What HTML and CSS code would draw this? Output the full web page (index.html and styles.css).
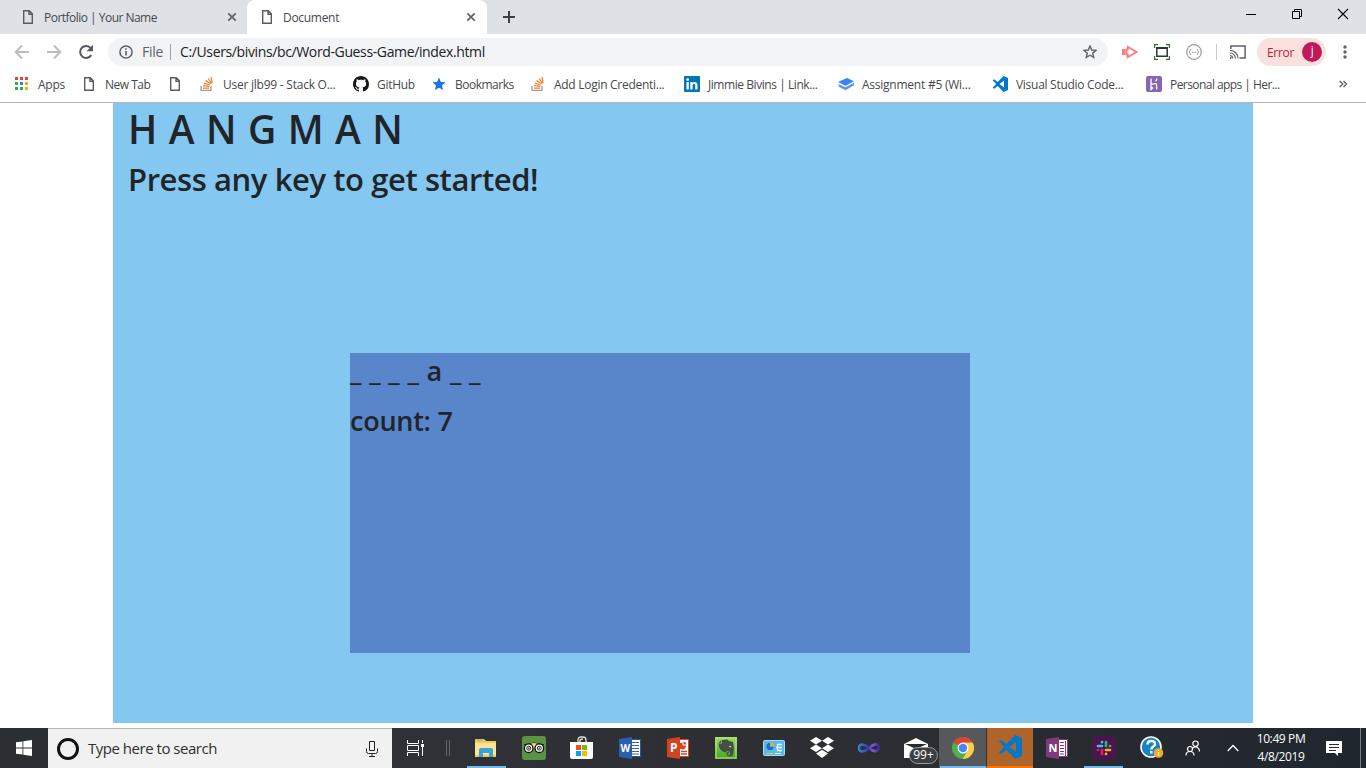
FILE: index.html
```html
<!DOCTYPE html>
<html lang="en">
<head>
<meta charset="utf-8">
<title>Document</title>
<link rel="stylesheet" href="styles.css">
</head>
<body>
<svg class="defs" width="0" height="0">
  <symbol id="page" viewBox="0 0 16 16"><path d="M3.700 1.700h5.600l3 3v9.600H3.700z M9 2v3.200h3.300" fill="none" stroke="#5a5d61" stroke-width="1.400"/></symbol>
  <symbol id="close" viewBox="0 0 10 10"><path d="M1.300 1.300l7.400 7.400M8.700 1.300L1.300 8.700" stroke="#5f6368" stroke-width="1.700"/></symbol>
  <symbol id="stack" viewBox="0 0 16 16"><path d="M2 10v4.300h10V10" fill="none" stroke="#9a9c9f" stroke-width="1.300"/><path d="M4 12.100h6.200M4.100 9.700l6.200.7M4.800 7.200l5.900 1.800M6.500 4.500l5.100 3.300M9.200 2.500l3.500 4.800M12 1.200l1.200 5.500" stroke="#f48024" stroke-width="1.250"/></symbol>
  <symbol id="vscode" viewBox="0 0 16 16"><path d="M11.500 0L5.700 6 2.200 3.300.6 4.200 4.200 8 .6 11.800l1.600.9 3.500-2.700 5.800 6 4.500-2V2zM12 4.600v6.800L7.600 8z" fill="#0078cc" fill-rule="evenodd"/></symbol>
</svg>

<header class="browser">
  <div class="tabstrip">
    <div class="tab">
      <svg class="ico16"><use href="#page"/></svg><span class="tab-title t-portfolio">Portfolio | Your Name</span><svg class="ico10"><use href="#close"/></svg>
    </div>
    <div class="tab tab-active">
      <svg class="ico16"><use href="#page"/></svg><span class="tab-title t-document">Document</span><svg class="ico10"><use href="#close"/></svg>
    </div>
    <svg class="newtab" viewBox="0 0 12 12"><path d="M6 0v12M0 6h12" stroke="#3c4043" stroke-width="2"/></svg>
    <div class="window-buttons">
      <svg width="12" height="12"><path d="M1 6.500h10" stroke="#000"/></svg>
      <svg width="12" height="12"><path d="M1.500 3.500h7v7h-7zM3.500 3.500v-2h7v7h-2" fill="none" stroke="#000"/></svg>
      <svg width="12" height="12"><path d="M1 1l10 10M11 1L1 11" stroke="#000" stroke-width="1.100"/></svg>
    </div>
  </div>

  <div class="toolbar">
    <svg class="nav" viewBox="0 0 16 16"><path d="M15 8H2M8 1.500L1.700 8 8 14.500" fill="none" stroke="#babcbe" stroke-width="1.900"/></svg>
    <svg class="nav" viewBox="0 0 16 16"><path d="M1 8h13M8 1.500L14.300 8 8 14.500" fill="none" stroke="#babcbe" stroke-width="1.900"/></svg>
    <svg class="nav" viewBox="0 0 16 16"><path d="M13.300 11A6 6 0 1 1 12.800 4.200" fill="none" stroke="#55595e" stroke-width="2"/><path d="M15 .8v6.500H8.500z" fill="#55595e"/></svg>
    <div class="omnibox">
      <svg width="14" height="14"><circle cx="7" cy="7" r="6.100" fill="none" stroke="#5f6368" stroke-width="1.500"/><path d="M7 6v4.600M7 3.200v1.600" stroke="#5f6368" stroke-width="1.600"/></svg>
      <span class="scheme">File</span>
      <span class="divider"></span>
      <span class="url">C:/Users/bivins/bc/Word-Guess-Game/index.html</span>
      <svg class="star" width="14" height="14" viewBox="0 0 14 14"><path d="M7 1l1.700 4 4.300.400-3.300 2.800 1 4.200L7 10.200l-3.700 2.200 1-4.200L1 5.400 5.300 5z" fill="none" stroke="#5f6368" stroke-width="1.400"/></svg>
    </div>
    <div class="extensions">
      <svg width="16" height="16"><path d="M0 5h3.500v6H0z" fill="#ff7b7b"/><path d="M5.800 2.800v2.700H4.500v5h1.300v2.700L14.500 8z" fill="none" stroke="#ff7b7b" stroke-width="1.800"/></svg>
      <svg width="16" height="16"><path d="M.6 4V.6H4M12 .6h3.400V4M15.400 12v3.400H12M4 15.400H.6V12" fill="none" stroke="#238023" stroke-width="1.300"/><path d="M2.800 3.800h10.400v8.400H2.800z" fill="#fff" stroke="#333" stroke-width="1.500"/><path d="M2 4h12" stroke="#333" stroke-width="2"/></svg>
      <svg width="16" height="16"><circle cx="8" cy="8" r="7.300" fill="none" stroke="#9c9c9c" stroke-width="1.200"/><path d="M5.300 5.300q-1.200 0-1.200 1.300T3 8q1.100 0 1.100 1.400t1.200 1.300M10.700 5.300q1.200 0 1.200 1.300T13 8q-1.100 0-1.100 1.400t-1.200 1.300M6 8.500h1m.6 0h1m.6 0h1" fill="none" stroke="#999"/></svg>
    </div>
    <span class="toolbar-divider"></span>
    <svg class="cast" width="18" height="16" viewBox="0 0 18 16"><path d="M1.900 5V2h14.200v12H10.500" fill="none" stroke="#5f6368" stroke-width="1.500"/><path d="M1 11.600a2.800 2.800 0 0 1 2.800 2.900M1 9a5.400 5.400 0 0 1 5.400 5.500M1 6.400a8 8 0 0 1 8 8.100" fill="none" stroke="#5f6368" stroke-width="1.200"/><circle cx="1.700" cy="14" r="1" fill="#5f6368"/></svg>
    <div class="profile"><span class="error">Error</span><span class="avatar">j</span></div>
    <svg class="more" width="4" height="14"><g fill="#5f6368"><circle cx="2" cy="2" r="1.700"/><circle cx="2" cy="7" r="1.700"/><circle cx="2" cy="12" r="1.700"/></g></svg>
  </div>

  <nav class="bookmarks">
    <a class="bm"><svg class="ico16" viewBox="0 0 16 16"><path d="M1 1h3v3H1zM6 1h3v3H6zM11 1h3v3h-3z" fill="#ea4335"/><path d="M1 6h3v3H1zM1 11h3v3H1zM6 11h3v3H6z" fill="#34a853"/><path d="M6 6h3v3H6z" fill="#1a83f5"/><path d="M11 6h3v3h-3zM11 11h3v3h-3z" fill="#fbac05"/></svg><span class="b-apps">Apps</span></a>
    <a class="bm"><svg class="ico16"><use href="#page"/></svg><span class="b-new">New Tab</span></a>
    <a class="bm"><svg class="ico16"><use href="#page"/></svg></a>
    <a class="bm"><svg class="ico16"><use href="#stack"/></svg><span class="b-user">User jlb99 - Stack O...</span></a>
    <a class="bm"><svg class="ico16" viewBox="0 0 16 16"><path fill="#191717" d="M8 0C3.580 0 0 3.580 0 8c0 3.540 2.290 6.530 5.470 7.590.4.070.55-.17.55-.38 0-.19-.01-.82-.01-1.490-2.010.37-2.530-.49-2.690-.94-.09-.23-.48-.94-.82-1.130-.28-.15-.68-.52-.01-.53.63-.01 1.080.58 1.230.82.720 1.210 1.870.87 2.330.66.070-.52.280-.87.510-1.070-1.780-.2-3.640-.89-3.640-3.950 0-.87.310-1.590.82-2.150-.08-.2-.36-1.020.08-2.120 0 0 .67-.21 2.200.82.640-.18 1.320-.27 2-.27s1.360.09 2 .27c1.530-1.040 2.200-.82 2.200-.82.440 1.100.160 1.920.080 2.120.510.560.820 1.270.820 2.150 0 3.070-1.870 3.750-3.650 3.950.290.250.540.730.540 1.480 0 1.070-.010 1.930-.010 2.200 0 .210.150.460.550.380A8.010 8.010 0 0 0 16 8c0-4.420-3.580-8-8-8z"/></svg><span class="b-git">GitHub</span></a>
    <a class="bm"><svg class="ico16" viewBox="0 0 16 16"><path d="M8 1.500l1.900 4.400 4.700.4-3.600 3.100 1.100 4.700L8 11.700l-4.100 2.400L5 9.400 1.400 6.300l4.700-.4z" fill="#1a73e8"/></svg><span class="b-book">Bookmarks</span></a>
    <a class="bm"><svg class="ico16"><use href="#stack"/></svg><span class="b-add">Add Login Credenti...</span></a>
    <a class="bm"><svg class="ico16" viewBox="0 0 16 16"><rect width="16" height="16" rx="1" fill="#0077b5"/><path d="M2.500 6h2.300v7.500H2.500zM6.300 6h2.200v1c1-1.700 5-1.700 5 2v4.500h-2.300V9.700c0-2.400-2.600-2.200-2.600 0v3.800H6.300z" fill="#fff"/><circle cx="3.650" cy="3.600" r="1.350" fill="#fff"/></svg><span class="b-link">Jimmie Bivins | Link...</span></a>
    <a class="bm"><svg class="ico16" viewBox="0 0 16 16"><path d="M0 6L9 2l7 3.300-8.500 4.500z" fill="#3b82f6"/><path d="M0 7.800l7.500 3.500L16 6.800v2.400l-8.500 5L0 10.300l1.300-.8z" fill="#5a96f8"/></svg><span class="b-assign">Assignment #5 (Wi...</span></a>
    <a class="bm"><svg class="ico16"><use href="#vscode"/></svg><span class="b-vs">Visual Studio Code...</span></a>
    <a class="bm"><svg class="ico16" viewBox="0 0 16 16"><rect width="16" height="16" rx="2" fill="#8566b5"/><path d="M5 2.500v6.300Q10.600 6.500 10.600 9v4.500M5 10.500v3l1.600-1.500zM10.800 2.500q0 1.600-1.200 2.800" fill="none" stroke="#fff" stroke-width="1.300"/></svg><span class="b-her">Personal apps | Her...</span></a>
    <svg class="overflow" width="8" height="8"><path d="M.7 1l3 3-3 3M4.500 1l3 3-3 3" fill="none" stroke="#5f6368" stroke-width="1.500"/></svg>
  </nav>
</header>

<main class="viewport">
  <div class="container">
    <h1>H A N G M A N</h1>
    <h2>Press any key to get started!</h2>
    <section class="game">
      <h3 class="word">_ _ _ _ a _ _</h3>
      <h3 class="count">count: 7</h3>
    </section>
  </div>
</main>

<footer class="taskbar">
  <div class="cell"><svg width="16" height="16"><path d="M0 2.300l6.500-.9v6.200H0zM7.300 1.200L16 0v7.600H7.300zM0 8.400h6.500v6.200L0 13.700zM7.300 8.400H16V16l-8.700-1.200z" fill="#fff"/></svg></div>
  <div class="search">
    <span class="cortana"></span>
    <span class="placeholder">Type here to search</span>
    <svg class="mic" width="12" height="18"><path d="M3.500 1.500h5v9h-5zM.5 8.500v3q0 2 2 2h7q2 0 2-2v-3M6 14v2.500M3 16.500h6" fill="none" stroke="#222"/></svg>
  </div>
  <div class="cell"><svg width="18" height="16"><path d="M.5 0v3.500h11V0M.5 16v-3.500h11V16M.5 5.500h11v5H.5zM15.500 0v3M15.500 7v9" fill="none" stroke="#fff"/><path d="M14 4h3v3h-3z" fill="#fff"/></svg></div>
  <div class="cell grip"><svg width="5" height="16"><path d="M1.500 0v16M4.500 0v16" stroke="#62656a"/></svg></div>
  <div class="cell running"><svg width="22" height="20"><path d="M0 2q0-1 1-1h8l2 2h10v16H0z" fill="#f6c951"/><path d="M0 5h21v12H0z" fill="#ffe394"/><path d="M2 2h6" stroke="#5cb6e5"/><path d="M4 19v-7q0-2 2-2h10q2 0 2 2v7h-4v-4H8v4z" fill="#35a5dc"/></svg></div>
  <div class="cell"><svg width="24" height="24"><rect width="24" height="24" rx="3" fill="#589442"/><path d="M2 8h5q5-3 10 0h5l-2 3H4z" fill="#111"/><path d="M8 8q4-2 8 0l-4 5z" fill="#efd28c"/><g fill="#fff" stroke="#111" stroke-width="1.300"><circle cx="6.700" cy="12.200" r="4.300"/><circle cx="17.300" cy="12.200" r="4.300"/></g><g fill="none" stroke="#222"><circle cx="6.700" cy="12.200" r="2"/><circle cx="17.300" cy="12.200" r="2"/></g><circle cx="6.700" cy="12.200" r="1" fill="#d23"/><circle cx="17.300" cy="12.200" r="1" fill="#284"/></svg></div>
  <div class="cell"><svg width="24" height="24"><path d="M8 7V4q0-3 3-3h2q3 0 3 3v3M10 7V5q0-2 3-2" fill="none" stroke="#ddd" stroke-width="1.300"/><path d="M0 6h23v15q0 2-2 2H2q-2 0-2-2z" fill="#fff"/><path d="M6 9h5v5H6z" fill="#f25022"/><path d="M12 9h5v5h-5z" fill="#7fba00"/><path d="M6 15h5v5H6z" fill="#00a4ef"/><path d="M12 15h5v5h-5z" fill="#ffb900"/></svg></div>
  <div class="cell"><svg width="22" height="22"><path d="M12 2.500h9.500v17H12z" fill="#fff" stroke="#2b579a"/><path d="M13 5.500h7M13 8.500h7M13 11.500h7M13 14.500h7M13 17h7" stroke="#3565ad"/><path d="M0 2l13-2v22L0 20z" fill="#2b5fac"/><text x="1.500" y="15" class="glyph w">W</text></svg></div>
  <div class="cell"><svg width="22" height="22"><path d="M12 2.500h9.500v17H12z" fill="#fff" stroke="#d24726"/><path d="M14 14.500h6M14 17h6" stroke="#d24726" stroke-width="1.400"/><circle cx="15.500" cy="9" r="3.400" fill="#d24726"/><path d="M16 8V4q4 0 4 4z" fill="#d24726" stroke="#fff"/><path d="M0 2l13-2v22L0 20z" fill="#d04423"/><text x="3" y="15" class="glyph">P</text></svg></div>
  <div class="cell"><svg width="22" height="22"><defs><linearGradient id="ever" x2="0" y2="1"><stop stop-color="#9bd96b"/><stop offset="1" stop-color="#4aa020"/></linearGradient></defs><rect width="22" height="22" fill="url(#ever)"/><rect x="1" y="1" width="20" height="20" fill="none" stroke="#b5ec82"/><path d="M3.500 6.500h3.500V3l5-.5 2 1.500 4 1q1.500 5 .5 10.500-.5 4-3.500 4-3.500 0-3.500-3 0-2 2.500-2v1.500q-1.300 0-1.300 1.300 0 1 1.500 1 1.500-1 .5-3.800l-3-.5-1 1.500Q4 14.500 3.500 6.500z" fill="#444e43"/><path d="M3.700 5.700h2.600V3z" fill="#444e43"/><path d="M13.500 9.500q2.500-2 3 1.200z" fill="#b5e592"/></svg></div>
  <div class="cell"><svg width="22" height="16"><rect x=".5" y=".5" width="21" height="15" rx="1" fill="#57b8ec" stroke="#a9dcf5"/><circle cx="7" cy="6.500" r="3.800" fill="#e8f7ff"/><path d="M7 6.500V2.700a3.800 3.800 0 0 1 3.800 3.800z" fill="#f8a32c"/><path d="M7 6.500h3.800a3.800 3.800 0 1 1-3.800-3.800z" fill="#1674bc"/><path d="M14 4.500h5M13 7.500h6M14 10.500h5M14.500 4v7" stroke="#eef9ff" stroke-width="1.300"/><path d="M3 13.500h7" stroke="#f8c24c"/><path d="M12 13.500h6" stroke="#eef"/></svg></div>
  <div class="cell"><svg width="24" height="22"><path d="M0 3.700L6 0l6 3.700-6 3.700zM12 3.700L18 0l6 3.700-6 3.700zM0 11.200l6-3.700 6 3.700L6 15zM12 11.200l6-3.700 6 3.700-6 3.800zM6 16.500l6-3.700 6 3.700-6 4.500z" fill="#fff"/></svg></div>
  <div class="cell"><svg width="24" height="14"><defs><linearGradient id="inf"><stop stop-color="#2987ca"/><stop offset=".45" stop-color="#3c38b5"/><stop offset=".7" stop-color="#8957c4"/><stop offset="1" stop-color="#3d2799"/></linearGradient></defs><path d="M12 7C8 3 2 2 2 7S8 11 12 7s10-5.500 10-.5-6 4.500-10 .5z" fill="none" stroke="url(#inf)" stroke-width="2.600"/></svg></div>
  <div class="cell mail"><svg width="24" height="20"><path d="M0 6l12-6 12 6v14H0z" fill="#fff"/><path d="M1 6h22l-11 5z" fill="#282b30"/></svg><span class="badge">99+</span></div>
  <div class="cell running chrome"><svg width="22" height="22"><circle cx="11" cy="11" r="11" fill="#4caf50"/><path d="M11 11L1.500 5.500A11 11 0 0 1 20.500 5.500z" fill="#e34133"/><path d="M11 5.500h9.500A11 11 0 0 1 10.700 22L16 13z" fill="#ffcd41"/><circle cx="11" cy="11" r="5.500" fill="#fff"/><circle cx="11" cy="11" r="4.200" fill="#4688f1"/></svg></div>
  <div class="cell code"><svg width="24" height="24"><use href="#vscode"/></svg></div>
  <div class="cell"><svg width="22" height="22"><path d="M12 2.500h9.500v17H12z" fill="#fff" stroke="#80397b"/><path d="M14 5.500h4M14 8.500h4M14 11.500h4M14 14.500h4M14 17h4M19.500 4v15" stroke="#80397b"/><path d="M0 2l13-2v22L0 20z" fill="#80397b"/><text x="2.500" y="15" class="glyph n">N</text></svg></div>
  <div class="cell running"><svg width="24" height="24"><rect width="24" height="24" rx="4" fill="#4a154b"/><g stroke-width="2.700" stroke-linecap="round"><path d="M6 10h4M10 6v.2" stroke="#36c5f0"/><path d="M14 6v4M18 10h.1" stroke="#2eb67d"/><path d="M14 14h4M14 18v-.1" stroke="#ecb22e"/><path d="M10 14v4M6 14h.1" stroke="#e01e5a"/></g></svg></div>
  <div class="cell"><svg width="24" height="24"><circle cx="11" cy="11" r="10" fill="#1683c4" stroke="#fff" stroke-width="1.600"/><path d="M7.500 8.500q0-3.500 3.800-3.500t3.700 3q0 1.700-2 2.800-1.700 1-1.700 2.700M11.300 15v2.500" fill="none" stroke="#fff" stroke-width="2.500"/><circle cx="18.500" cy="17" r="4.800" fill="#f4a91e"/><path d="M18.500 16v4M18.500 13.700v1.300" stroke="#fff" stroke-width="1.300"/></svg></div>
  <div class="cell"><svg width="16" height="16"><g fill="none" stroke="#fff" stroke-width="1.200"><circle cx="10.500" cy="3.700" r="2.700"/><path d="M7.500 8.200q3-2.500 5.500-.3 1.500 1 1.500 3.600"/><circle cx="5" cy="9" r="2.500"/><path d="M1 15.500q0-4 4-4t4 4"/></g></svg></div>
  <div class="cell"><svg width="12" height="8"><path d="M.7 7L6 1.500 11.300 7" fill="none" stroke="#fff" stroke-width="1.300"/></svg></div>
  <div class="clock"><span class="time">10:49 PM</span><span class="date">4/8/2019</span></div>
  <div class="cell"><svg width="16" height="15"><path d="M0 0h16v12h-4v3l-3-3H0z" fill="#fff"/><path d="M3 3.500h10M3 6.500h10M3 9.500h7" stroke="#252a31"/></svg></div>
  <div class="show-desktop"></div>
</footer>
</body>
</html>
```

FILE: styles.css
```css
* { box-sizing: border-box; }
body { margin: 0; width: 1366px; height: 768px; overflow: hidden; background: #fff; color: #212529; font-family: "Open Sans", "Noto Sans", sans-serif; display: flex; flex-direction: column; }
svg { display: block; flex: none; }
.defs { display: none; }
span, h1, h2, h3 { white-space: nowrap; }
.ico16 { width: 16px; height: 16px; }
.ico10 { width: 10px; height: 10px; }

/* Browser chrome */
.browser { height: 103px; border-bottom: 1px solid #b6b4b6; flex: none; }
.tabstrip { height: 34px; background: #dee1e6; display: flex; align-items: center; }
.tab { height: 34px; width: 247px; padding: 0 10px 0 20px; display: flex; align-items: center; font-size: 12px; color: #45494d; }
.tab-active { width: 240px; padding: 0 11px 0 12px; background: #fff; border-radius: 8px 8px 0 0; }
.tab-title { margin-left: 8px; flex: 1; }
.t-portfolio { letter-spacing: -.52px; }
.t-document { letter-spacing: -.3px; }
.newtab { width: 12px; height: 12px; margin-left: 16px; }
.window-buttons { display: flex; gap: 34px; margin: -6px 17px 0 auto; }

.toolbar { height: 36px; padding-left: 14px; display: flex; align-items: center; }
.nav { width: 16px; height: 16px; margin-right: 16px; }
.nav + .nav + .nav { margin-right: 14px; }
.omnibox { width: 1000px; height: 28px; border-radius: 14px; background: #f1f3f4; display: flex; align-items: center; padding: 0 11px; font-size: 14px; }
.scheme { width: 20px; margin-left: 9px; color: #5f6368; letter-spacing: -.3px; }
.divider { width: 1px; height: 16px; background: #9aa0a6; margin: 0 9px 0 8px; }
.url { color: #202124; letter-spacing: -.37px; }
.star { margin-left: auto; }
.scheme, .url { position: relative; top: -1px; }
.extensions { display: flex; gap: 16px; margin-left: 14px; }
.toolbar-divider { width: 1px; height: 16px; background: #c8cace; margin: 0 12px 0 14px; }
.profile { width: 69px; height: 28px; border-radius: 14px; background: #fae1df; display: flex; align-items: center; justify-content: space-between; padding: 0 4px 0 10px; margin-left: 10px; color: #c5221f; font-size: 12px; letter-spacing: -.3px; }
.avatar { width: 20px; height: 20px; border-radius: 50%; background: #c2185b; color: #fff; text-align: center; line-height: 18px; }
.more { margin-left: 17px; }

.bookmarks { height: 28px; display: grid; grid-template-columns: 67px 86px 32px 154px 78px 99px 154px 154px 154px 154px 193px 8px; padding-left: 14px; align-items: center; }
.bm { display: flex; align-items: center; gap: 8px; font-size: 12px; color: #45494d; }
.b-apps, .b-user, .b-assign { letter-spacing: -.24px; }
.b-new, .b-book { letter-spacing: -.5px; }
.b-git, .b-add, .b-vs { letter-spacing: -.28px; }
.b-link { letter-spacing: -.44px; }
.b-her { letter-spacing: -.56px; }

/* Page */
.viewport { height: 620px; flex: none; }
.container { width: 1140px; height: 620px; margin: 0 auto; padding: 0 15px; background: #84c7f0; }
h1, h2, h3 { margin: 0; font-weight: 600; line-height: 1.2; }
h1 { height: 56px; padding-top: 3px; font-size: 39px; letter-spacing: .65px; }
h2 { height: 46px; padding-top: 2px; font-size: 31px; letter-spacing: -.42px; }
.game { width: 620px; height: 300px; margin: 148px 0 0 222px; background: #5986cb; }
h3 { height: 50px; padding-top: 2px; font-size: 27px; }
.word { letter-spacing: .33px; }
.count { letter-spacing: -.25px; }

/* Taskbar */
.taskbar { height: 40px; margin-top: 5px; background: linear-gradient(90deg, #2b2f33, #303136 35%, #2a2d31 70%, #20262e); color: #fff; display: grid; grid-template-columns: 48px 344px 48px 22px repeat(7, 48px) repeat(7, 47px) 49px 34px 45px 52px 53px 5px; grid-template-rows: 40px; }
.cell { display: flex; align-items: center; justify-content: center; }
.grip { justify-content: flex-start; padding-left: 5px; }
.search { background: #f1f1f1; border-top: 1px solid #b8b8b8; display: flex; align-items: center; padding: 0 14px 0 9px; color: #303030; font-size: 15px; }
.cortana { width: 22px; height: 22px; border: 3px solid #111; border-radius: 50%; margin-right: 9px; }
.placeholder { letter-spacing: -.48px; padding-bottom: 2px; }
.mic { margin-left: auto; }
.running { background: linear-gradient(#76b9ed, #76b9ed) center bottom / 39px 2px no-repeat; }
.chrome { background-color: #56585b; background-size: 46px 2px; }
.code { background: #ae642b; border-bottom: 2px solid #ff7300; border-left: 1px solid #333; }
.glyph { font: 700 12px "Open Sans", sans-serif; fill: #fff; }
.w { font-size: 10px; }
.n { font-size: 11px; }
.mail { position: relative; }
.badge { position: absolute; left: 17px; top: 19px; width: 29px; height: 17px; border: 1px solid #9a9c9e; border-radius: 9px; background: #3b3e42; font-size: 12px; line-height: 14px; text-align: center; }
.clock { display: flex; flex-direction: column; align-items: center; font-size: 12px; line-height: 18px; padding-top: 2px; letter-spacing: -.38px; }
.show-desktop { border-left: 1px solid #777b80; }
```
